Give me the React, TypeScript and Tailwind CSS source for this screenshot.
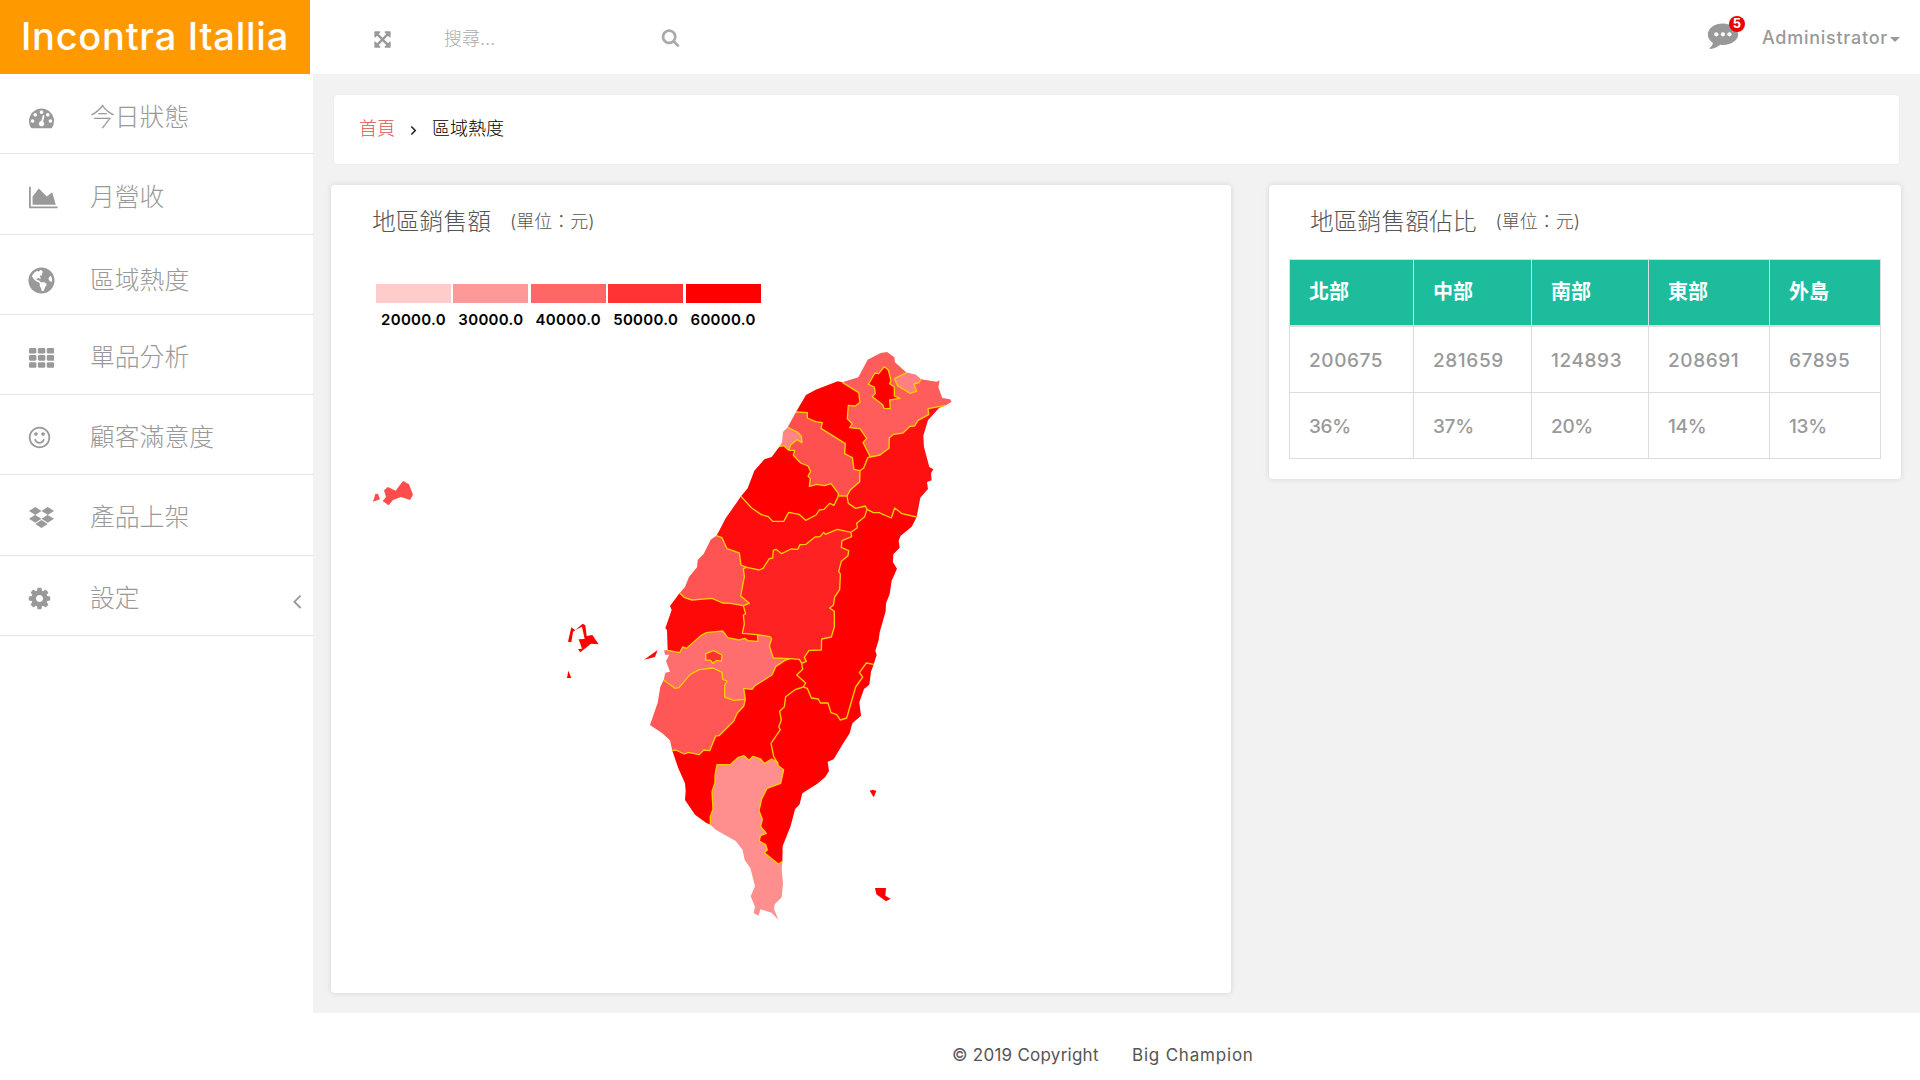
import type { ReactNode } from "react";
import { FaDropbox, FaGlobeAmericas } from "react-icons/fa";

/* ---------- icons ---------- */

const GLYPHS = {
  gauge:
    "M384 1152q0-53-37.5-90.5t-90.5-37.5-90.5 37.5-37.5 90.5 37.5 90.5 90.5 37.5 90.5-37.5 37.5-90.5zm192-448q0-53-37.5-90.5t-90.5-37.5-90.5 37.5-37.5 90.5 37.5 90.5 90.5 37.5 90.5-37.5 37.5-90.5zm428 481l101-382q6-26-7.5-48.5t-38.5-29.5-48 6.5-30 39.5l-101 382q-60 5-107 43.5t-63 98.5q-20 77 20 146t117 89 146-20 89-117q16-60-6-117t-72-91zm660-33q0-53-37.5-90.5t-90.5-37.5-90.5 37.5-37.5 90.5 37.5 90.5 90.5 37.5 90.5-37.5 37.5-90.5zm-640-640q0-53-37.5-90.5t-90.5-37.5-90.5 37.5-37.5 90.5 37.5 90.5 90.5 37.5 90.5-37.5 37.5-90.5zm448 192q0-53-37.5-90.5t-90.5-37.5-90.5 37.5-37.5 90.5 37.5 90.5 90.5 37.5 90.5-37.5 37.5-90.5zm320 448q0 261-141 483-19 29-54 29h-1402q-35 0-54-29-141-221-141-483 0-182 71-348t191-286 286-191 348-71 348 71 286 191 191 286 71 348z",
  area: "M2048 1536v128h-2048v-1536h128v1408h1920zm-384-1024l256 896h-1664v-576l448-576 576 576z",
  smile:
    "M1262 1075q-37 121-138 195t-228 74-228-74-138-195q-8-25 4-48.5t38-31.5q25-8 48.5 4t31.5 38q25 80 92.5 129.5t151.5 49.5 151.5-49.5 92.5-129.5q8-26 32-38t49-4 37 31.5 4 48.5zm-494-435q0 53-37.5 90.5t-90.5 37.5-90.5-37.5-37.5-90.5 37.5-90.5 90.5-37.5 90.5 37.5 37.5 90.5zm512 0q0 53-37.5 90.5t-90.5 37.5-90.5-37.5-37.5-90.5 37.5-90.5 90.5-37.5 90.5 37.5 37.5 90.5zm256 256q0-130-51-248.5t-136.5-204-204-136.5-248.5-51-248.5 51-204 136.5-136.5 204-51 248.5 51 248.5 136.5 204 204 136.5 248.5 51 248.5-51 204-136.5 136.5-204 51-248.5zm128 0q0 209-103 385.5t-279.5 279.5-385.5 103-385.5-103-279.5-279.5-103-385.5 103-385.5 279.5-279.5 385.5-103 385.5 103 279.5 279.5 103 385.5z",
  cog: "M1152 896q0-106-75-181t-181-75-181 75-75 181 75 181 181 75 181-75 75-181zm512-109v222q0 12-8 23t-20 13l-185 28q-19 54-39 91 35 50 107 138 10 12 10 25t-9 23q-27 37-99 108t-94 71q-12 0-26-9l-138-108q-44 23-91 38-16 136-29 186-7 28-36 28h-222q-14 0-24.5-8.5t-11.5-21.5l-28-184q-49-16-90-37l-141 107q-10 9-25 9-14 0-25-11-126-114-165-168-7-10-7-23 0-12 8-23 15-21 51-66.5t54-70.5q-27-50-41-99l-183-27q-13-2-21-12.5t-8-23.5v-222q0-12 8-23t19-13l186-28q14-46 39-92-40-57-107-138-10-12-10-24 0-10 9-23 26-36 98.5-107.5t94.5-71.5q13 0 26 10l138 107q44-23 91-38 16-136 29-186 7-28 36-28h222q14 0 24.5 8.5t11.5 21.5l28 184q49 16 90 37l142-107q9-9 24-9 13 0 25 10 129 119 165 170 7 8 7 22 0 12-8 23-15 21-51 66.5t-54 70.5q26 50 41 98l183 28q13 2 21 12.5t8 23.5z",
  search:
    "M1216 832q0-185-131.5-316.5t-316.5-131.5-316.5 131.5-131.5 316.5 131.5 316.5 316.5 131.5 316.5-131.5 131.5-316.5zm512 832q0 52-38 90t-90 38q-54 0-90-38l-343-342q-179 124-399 124-143 0-273.5-55.5t-225-150-150-225-55.5-273.5 55.5-273.5 150-225 225-150 273.5-55.5 273.5 55.5 225 150 150 225 55.5 273.5q0 220-124 399l343 343q37 37 37 90z",
  expand:
    "M1411 541l-355 355 355 355 144-144q29-31 70-14 39 17 39 59v448q0 26-19 45t-45 19h-448q-42 0-59-40-17-39 14-69l144-144-355-355-355 355 144 144q31 30 14 69-17 40-59 40h-448q-26 0-45-19t-19-45v-448q0-42 40-59 39-17 69 14l144 144 355-355-355-355-144 144q-19 19-45 19-12 0-24-5-40-17-40-59v-448q0-26 19-45t45-19h448q42 0 59 40 17 39-14 69l-144 144 355 355 355-355-144-144q-31-30-14-69 17-40 59-40h448q26 0 45 19t19 45v448q0 42-39 59-13 5-25 5-26 0-45-19z",
  angleLeft:
    "M1203 544q0 13-10 23l-393 393 393 393q10 10 10 23t-10 23l-50 50q-10 10-23 10t-23-10l-466-466q-10-10-10-23t10-23l466-466q10-10 23-10t23 10l50 50q10 10 10 23z",
};

function Glyph({ name, className }: { name: keyof typeof GLYPHS; className: string }) {
  return (
    <svg viewBox="0 0 1792 1792" fill="currentColor" className={`overflow-visible shrink-0 ${className}`}>
      <path d={GLYPHS[name]} />
    </svg>
  );
}

function GridIcon() {
  return (
    <svg viewBox="0 0 25 20" fill="currentColor" className="h-[20px] w-[25px]">
      {[0, 7.1, 14.2].map((y) =>
        [0, 8.9, 17.8].map((x) => <rect key={`${x}-${y}`} x={x} y={y} width="7.4" height="5.6" rx="1.4" />),
      )}
    </svg>
  );
}

/* ---------- map geometry ---------- */

type Pt = [number, number];

const arc = (dx: number, dy: number) => (s: string): Pt[] =>
  s.split(" ").map((p) => {
    const [x, y] = p.split(",").map(Number);
    return [x + dx, y + dy];
  });

// Survey tiles: every arc is written in the frame of the tile that holds it.
const north = arc(1020, 0);
const mid = arc(840, 300);
const south = arc(810, 750);
const cape = arc(810, 1140);
const sea = arc(0, 360);

const rev = (a: Pt[]) => [...a].reverse();
const toPath = (pts: Pt[]) => "M" + pts.map((p) => p.join(" ")).join("L");

const coast = {
  newTaipei: north("427,127 475,112 503,59 542,39 561,36 583,52 585,67 620,98 647,104 663,118 710,125 719,121 715,142 727,174 750,178 755,185 738,196"),
  yilan: north("738,196 717,204 684,241 670,287 672,321 688,381 700,388 693,400 695,421 681,426 684,447 661,473 650,531"),
  hualien: mid("830,231 815,260 782,287 776,302 779,323 760,343 759,367 771,386 755,422 749,462 738,490 737,514 719,577 716,600 706,632 710,645 701,673"),
  taitung: [
    ...south("731,223 723,245 718,284 702,297 688,337 693,377 667,400 659,430 637,464 611,508 593,515 597,543 585,562 561,582 517,610"),
    ...cape("509,253 495,268 482,318 458,378 457,425"),
  ],
  pingtung: cape("457,425 455,448 459,490 455,532 434,553 432,567 445,599 425,578 391,568 386,587 371,579 375,560 362,529 375,499 361,444 344,420 338,390 317,363 257,329 241,314"),
  kaohsiung: cape("241,314 228,308 195,284 165,240 167,212 165,190 145,145 127,92"),
  tainan: south("127,482 120,451 97,430 60,405 83,338 91,290 101,270"),
  chiayi: south("101,270 106,248 120,245 108,213 118,194 105,194 102,181 113,181"),
  yunlin: mid("83,631 81,570 76,565 95,510 90,498 119,459"),
  changhua: mid("119,459 135,441 147,411 171,382 173,360 191,342 212,299 229,287"),
  taichung: mid("229,287 236,275 257,235 303,169"),
  miaoli: north("123,469 143,445 163,392 193,358 215,351 238,320"),
  hsinchuCity: north("238,320 246,307 249,276 263,262"),
  hsinchu: north("263,262 288,216"),
  taoyuan: north("288,216 318,165 347,149 413,124 427,127"),
};

const edge = {
  ntYilan: north("738,196 684,206 686,224 654,241 644,258 630,259 609,279 581,283 568,293 567,325 540,345 511,351"),
  ntTaoyuan: north("427,127 476,158 480,187 466,198 445,196 442,236 457,251 449,263 480,266 500,295 489,307 511,351"),
  tyYilan: north("511,351 503,353 491,384 480,392"),
  tyHsinchu: north("480,392 462,388 457,353 434,341 436,311 363,265 367,248 347,245 322,234 322,218 288,216"),
  hcYilan: north("480,392 479,425 450,451 441,468"),
  hcTaichung: north("441,468 415,468"),
  hcMiaoli: north("415,468 415,460 393,431 373,437 351,433 328,439 331,416 324,408 332,394 324,378 302,369 280,346 284,331 266,331"),
  cityCounty: north("266,331 272,314 291,299 306,308 304,288 293,277 263,262"),
  cityMiaoli: north("238,320 252,317 266,331"),
  mlTaichung: north("123,469 155,504 184,524 205,530 218,544 251,544 266,517 297,523 317,541 348,525 358,510 372,508 389,490 402,496 415,468"),
  tcYilan: north("441,468 445,490 467,505 496,498 501,508"),
  ylHualien: north("501,508 520,518 537,518 574,534 584,504 606,521 650,531"),
  tcHualien: mid("681,208 674,230 650,250 652,263 633,277"),
  tcNantou: mid("633,277 592,268 556,283 551,277 540,290 525,291 498,313 480,314 473,328 453,327 425,341 408,328 400,331 398,354 388,356 369,385 358,390 320,382"),
  chTaichung: mid("229,287 246,293 261,326 298,339 303,375 320,382"),
  chNantou: mid("320,382 310,386 313,410 302,468 328,490 310,497"),
  chYunlin: mid("119,459 134,473 156,480 216,475 248,489 271,490 310,497"),
  ynNantou: mid("310,497 317,522 310,525 313,552 307,580 352,584"),
  ynChiayi: mid("352,584 354,604 324,602 314,595 297,600 263,593 248,573 199,578 184,586 140,625 128,621 119,638 83,631"),
  cyNantou: mid("352,584 390,590 395,596 388,618 400,654 450,656"),
  khNantou: mid("450,656 478,658 485,670"),
  ntouHualien: mid("633,277 635,290 606,302 604,322 626,332 624,347 604,364 596,394 601,402 599,449 584,471 580,496 569,504 583,514 583,561 574,591 545,597 544,630 507,631 493,652 499,664 485,670"),
  cyTainan: south("101,270 135,295 147,293 181,253 208,239 249,234 276,247 278,268 291,273 284,287 284,321 311,331 346,328"),
  cyKaohsiung: south("346,328 341,295 366,298 375,287 426,255 437,230 465,211 480,206"),
  khHualien: south("515,220 518,238 500,255 527,279 520,291"),
  khTaitung: south("520,291 495,299 467,320 463,350 449,364 454,390 446,411 451,419 423,460 431,499 443,520 443,526"),
  ttHualien: south("520,291 532,295 544,324 565,327 571,339 594,339 603,368 620,374 631,390 650,384 677,291 698,261 688,248 709,219 731,223"),
  ptTaitung: cape("443,136 461,149 452,190 411,205 395,237 387,272 397,298 392,319 409,340 391,347 388,363 407,374 412,389 403,398 445,432 457,425"),
  ptKaohsiung: cape("443,136 443,127 425,117 403,131 392,117 368,109 357,121 342,107 325,112 301,134 261,134 255,166 255,187 246,215 249,268 241,289 241,314"),
  khTainan: south("127,482 137,480 163,492 175,487 208,494 221,480 239,482 257,438 267,437 311,394 322,369 341,349 346,328"),
};

const enclave = {
  taipei: north("553,80 565,90 573,122 569,131 583,141 583,168 600,175 569,180 571,206 552,205 548,194 517,170 526,160 523,141 505,133 525,99 536,101 553,80"),
  keelung: north("620,98 647,104 663,118 657,128 642,132 650,154 630,160 593,137 583,116 620,98"),
  chiayiCity: mid("221,632 246,645 244,664 231,661 218,670 212,661 197,660 197,641 221,632"),
};

const regions: { name: string; fill: string; ring: Pt[] }[] = [
  { name: "newTaipei", fill: "#ff5c5c", ring: [...coast.newTaipei, ...edge.ntYilan, ...rev(edge.ntTaoyuan)] },
  { name: "yilan", fill: "#ff1010", ring: [...coast.yilan, ...rev(edge.ylHualien), ...rev(edge.tcYilan), ...rev(edge.hcYilan), ...rev(edge.tyYilan), ...rev(edge.ntYilan)] },
  { name: "taoyuan", fill: "#ff0000", ring: [...coast.taoyuan, ...edge.ntTaoyuan, ...edge.tyYilan, ...edge.tyHsinchu] },
  { name: "hsinchu", fill: "#ff5050", ring: [...coast.hsinchu, ...rev(edge.tyHsinchu), ...edge.hcYilan, ...edge.hcTaichung, ...edge.hcMiaoli, ...edge.cityCounty] },
  { name: "hsinchuCity", fill: "#ff8484", ring: [...coast.hsinchuCity, ...rev(edge.cityCounty), ...rev(edge.cityMiaoli)] },
  { name: "miaoli", fill: "#ff0000", ring: [...coast.miaoli, ...edge.cityMiaoli, ...rev(edge.hcMiaoli), ...rev(edge.mlTaichung)] },
  { name: "taichung", fill: "#ff0c0c", ring: [...coast.taichung, ...edge.mlTaichung, ...rev(edge.hcTaichung), ...edge.tcYilan, ...edge.tcHualien, ...edge.tcNantou, ...rev(edge.chTaichung)] },
  { name: "changhua", fill: "#ff5454", ring: [...coast.changhua, ...edge.chTaichung, ...edge.chNantou, ...rev(edge.chYunlin)] },
  { name: "nantou", fill: "#ff2222", ring: [...rev(edge.tcNantou), ...edge.ntouHualien, ...rev(edge.khNantou), ...rev(edge.cyNantou), ...rev(edge.ynNantou), ...rev(edge.chNantou)] },
  { name: "yunlin", fill: "#ff0808", ring: [...coast.yunlin, ...edge.chYunlin, ...edge.ynNantou, ...edge.ynChiayi] },
  { name: "chiayi", fill: "#ff6e6e", ring: [...coast.chiayi, ...rev(edge.ynChiayi), ...edge.cyNantou, ...rev(edge.cyKaohsiung), ...rev(edge.cyTainan)] },
  { name: "tainan", fill: "#ff5656", ring: [...coast.tainan, ...edge.cyTainan, ...rev(edge.khTainan)] },
  { name: "kaohsiung", fill: "#ff0000", ring: [...coast.kaohsiung, ...edge.khTainan, ...edge.cyKaohsiung, ...edge.khNantou, ...edge.khHualien, ...edge.khTaitung, ...edge.ptKaohsiung] },
  { name: "hualien", fill: "#ff0000", ring: [...coast.hualien, ...rev(edge.ttHualien), ...rev(edge.khHualien), ...rev(edge.ntouHualien), ...rev(edge.tcHualien), ...edge.ylHualien] },
  { name: "taitung", fill: "#ff0000", ring: [...coast.taitung, ...rev(edge.ptTaitung), ...rev(edge.khTaitung), ...edge.ttHualien] },
  { name: "pingtung", fill: "#ff8e8e", ring: [...coast.pingtung, ...rev(edge.ptKaohsiung), ...edge.ptTaitung] },
  { name: "taipei", fill: "#ff0000", ring: enclave.taipei },
  { name: "keelung", fill: "#ff8080", ring: enclave.keelung },
  { name: "chiayiCity", fill: "#ff3030", ring: enclave.chiayiCity },
];

const keelungInland = north("663,118 657,128 642,132 650,154 630,160 593,137 583,116 620,98");

const islands: { fill: string; ring: Pt[] }[] = [
  { fill: "#ff4c4c", ring: sea("129,63 147,73 159,104 150,120 123,111 99,120 86,136 68,123 78,111 72,91 84,81 107,92") },
  { fill: "#ff4c4c", ring: sea("46,102 54,101 60,118 39,125") },
  { fill: "#ff0000", ring: sea("634,502 646,511 639,515 634,547 624,545") },
  { fill: "#ff0000", ring: sea("646,510 668,491 676,496 680,528 697,525 716,553 693,551 661,577 654,568 666,566 656,538 674,537 666,500") },
  { fill: "#ff0000", ring: sea("625,632 634,654 621,654") },
  { fill: "#ff0808", ring: sea("893,570 885,591 852,599") },
  { fill: "#ff0000", ring: cape("719,212 729,209 739,213 731,232") },
  { fill: "#ff0000", ring: cape("735,504 768,504 766,527 782,536 768,544 739,523") },
];

function TaiwanMap() {
  return (
    <svg viewBox="0 0 1800 1800" className="h-[600px] w-[600px]">
      {regions.map((r) => (
        <path key={r.name} d={toPath(r.ring) + "Z"} fill={r.fill} />
      ))}
      {islands.map((r, i) => (
        <path key={i} d={toPath(r.ring) + "Z"} fill={r.fill} />
      ))}
      <g fill="none" stroke="#ffcc00" strokeWidth="4" strokeLinejoin="round">
        {[...Object.values(edge), enclave.taipei, enclave.chiayiCity, keelungInland].map((e, i) => (
          <path key={i} d={toPath(e)} />
        ))}
      </g>
    </svg>
  );
}

/* ---------- page ---------- */

const menu: { label: string; row: string; slot: string; icon: ReactNode; open?: boolean }[] = [
  { label: "今日狀態", row: "h-[80px] pt-[7px]", slot: "pl-[29px]", icon: <Glyph name="gauge" className="size-[25px]" /> },
  { label: "月營收", row: "h-[81px] pt-[6px]", slot: "pl-[29px]", icon: <Glyph name="area" className="size-[25px]" /> },
  { label: "區域熱度", row: "h-[80px] pt-[11px]", slot: "pl-[28px]", icon: <FaGlobeAmericas className="size-[27px]" /> },
  { label: "單品分析", row: "h-[80px] pt-[6px]", slot: "pl-[29px]", icon: <GridIcon /> },
  { label: "顧客滿意度", row: "h-[80px] pt-[6px]", slot: "pl-[27px]", icon: <Glyph name="smile" className="size-[25px]" /> },
  { label: "產品上架", row: "h-[81px] pt-[5px]", slot: "pl-[29px]", icon: <FaDropbox className="size-[25px]" /> },
  { label: "設定", row: "h-[80px] pt-[5px]", slot: "pl-[27px]", icon: <Glyph name="cog" className="size-[25px]" />, open: true },
];

const legend = [
  { label: "20000.0", swatch: "bg-[#ffcccc]" },
  { label: "30000.0", swatch: "bg-[#ff9999]" },
  { label: "40000.0", swatch: "bg-[#ff6666]" },
  { label: "50000.0", swatch: "bg-[#ff3333]" },
  { label: "60000.0", swatch: "bg-[#ff0000]" },
];

const heads = ["北部", "中部", "南部", "東部", "外島"];
const rows = [
  { key: "sales", cells: ["200675", "281659", "124893", "208691", "67895"], look: "h-[67px] tracking-[0.6px]" },
  { key: "share", cells: ["36%", "37%", "20%", "14%", "13%"], look: "h-[66px] tracking-[-0.3px]" },
];

function CardTitle({ title }: { title: string }) {
  return (
    <h2 className="flex h-[73px] items-center pl-[41px] text-[#555]">
      <span className="text-[23.8px] font-light leading-none">{title}</span>
      <span className="ml-[19px] text-[18px] font-light leading-none">(單位：元)</span>
    </h2>
  );
}

export default function App() {
  return (
    <div className="flex h-[1080px] w-[1920px] flex-col overflow-hidden bg-white font-['Inter','Noto_Sans_CJK_TC',sans-serif] text-[#999]">
      <header className="flex h-[74px] shrink-0 items-center bg-white">
        <div className="flex h-full w-[310px] items-center justify-center bg-[#ff9900] pb-[2px] text-[38px] font-medium leading-none tracking-[0.75px] text-white">
          <span className="whitespace-nowrap">Incontra Itallia</span>
        </div>
        <Glyph name="expand" className="ml-[63px] mt-[5px] size-[19px]" />
        <span className="ml-[52px] mt-[3px] w-[217px] text-[18px] font-light leading-none text-[#aaa]">搜尋...</span>
        <Glyph name="search" className="size-[19px] text-[#aaa]" />
        <div className="relative -mt-[3px] ml-auto mr-[23px] h-[26px] w-[32px]">
          <svg viewBox="0 0 32 26" className="h-[26px] w-[32px]">
            <path d="M16 0.5C7.5 .5 .8 5.400.8 11.500c0 3.400 2 6.400 5.200 8.400-.6 2.200-1.800 3.800-3.300 5.200-.3.400 0 .9.500.8 4-.5 7.500-2 10-4.200 1 .1 1.800.2 2.800.2 8.500 0 15.200-4.600 15.200-10.400S24.500.5 16 .5z" fill="#999" />
            <g fill="#fff">
              <circle cx="9.300" cy="11.300" r="2.100" />
              <circle cx="15.900" cy="11.300" r="2.100" />
              <circle cx="22.400" cy="11.300" r="2.100" />
            </g>
          </svg>
          <span className="absolute -top-[7px] left-[22px] flex size-[16px] items-center justify-center rounded-full bg-[#ee0000] text-[13px] font-bold leading-none text-white">5</span>
        </div>
        <span className="mt-[2px] text-[18px] font-medium leading-none tracking-[0.75px]">Administrator</span>
        <span className="ml-[2px] mr-[20px] mt-[4px] border-x-[5px] border-t-[5px] border-x-transparent border-t-[#999]" />
      </header>

      <div className="flex h-[939px] shrink-0">
        <nav className="w-[313px] shrink-0 bg-white">
          {menu.map((m) => (
            <div key={m.label} className={`flex items-center border-b border-[#e7e7e7] ${m.row}`}>
              <span className={`flex w-[90px] ${m.slot}`}>{m.icon}</span>
              <span className="text-[24.8px] font-light leading-none">{m.label}</span>
              {m.open && <Glyph name="angleLeft" className="ml-auto mr-[4px] mt-[6px] size-[24px]" />}
            </div>
          ))}
        </nav>

        <main className="flex-1 bg-[#f2f2f2] pl-[18px] pt-[21px]">
          <div className="ml-[3px] flex h-[69px] w-[1565px] items-center rounded-[4px] bg-white pb-px pl-[25px] text-[18px] font-light leading-none shadow-[0_0_1px_1px_#eaeef5]">
            <span className="text-[#d9534f]">首頁</span>
            <svg viewBox="0 0 8 12" className="ml-[15px] mr-[15px] mt-[3px] h-[11px] w-[7px]" fill="none" stroke="#222" strokeWidth="1.800">
              <path d="M1.500 1.500L6 6l-4.500 4.500" />
            </svg>
            <span className="text-black">區域熱度</span>
          </div>

          <div className="mt-[21px] flex items-start gap-[38px]">
            <section className="h-[808px] w-[900px] rounded-[4px] bg-white shadow-[0_0_5px_1px_#dcdcdc]">
              <CardTitle title="地區銷售額" />
              <div className="ml-[45px] mt-[26px] flex">
                {legend.map((l) => (
                  <div key={l.label} className="mr-[2.400px] w-[75px]">
                    <div className={`h-[19px] ${l.swatch}`} />
                    <div className="mt-[9px] text-center text-[15px] font-semibold leading-none tracking-[0.3px] text-black">
                      {l.label}
                    </div>
                  </div>
                ))}
              </div>
              <div className="ml-[29px] mt-[13px]">
                <TaiwanMap />
              </div>
            </section>

            <section className="h-[294px] w-[632px] rounded-[4px] bg-white px-[20px] shadow-[0_0_5px_1px_#dcdcdc]">
              <div className="-mx-[20px] h-[74px]">
                <CardTitle title="地區銷售額佔比" />
              </div>
              <table className="w-[591px] table-fixed border-collapse text-left text-[19px] font-medium">
                <colgroup>
                  <col className="w-[124px]" />
                  <col className="w-[118px]" />
                  <col className="w-[117px]" />
                  <col className="w-[121px]" />
                  <col className="w-[111px]" />
                </colgroup>
                <thead>
                  <tr className="h-[66px] bg-[#1cbc9c] text-white">
                    {heads.map((h) => (
                      <th key={h} className="border border-b-2 border-[#ddd] pl-[19px] text-[20px] font-bold">
                        {h}
                      </th>
                    ))}
                  </tr>
                </thead>
                <tbody>
                  {rows.map((r) => (
                    <tr key={r.key} className={r.look}>
                      {r.cells.map((c) => (
                        <td key={c} className="border border-[#ddd] pl-[19px] pt-[3px]">
                          {c}
                        </td>
                      ))}
                    </tr>
                  ))}
                </tbody>
              </table>
            </section>
          </div>
        </main>
      </div>

      <footer className="flex flex-1 items-center pl-[952px] pt-[17px] text-[17px] leading-none text-[#555]">
        <span className="w-[180px] tracking-[0.25px]">© 2019 Copyright</span>
        <span className="tracking-[0.8px]">Big Champion</span>
      </footer>
    </div>
  );
}
